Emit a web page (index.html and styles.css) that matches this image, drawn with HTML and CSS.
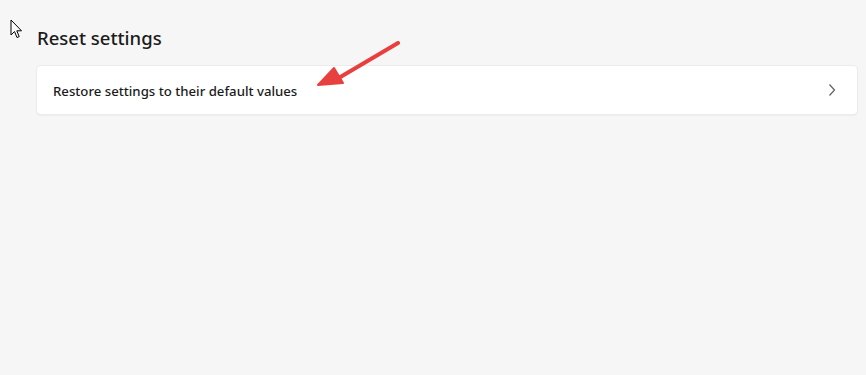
FILE: index.html
```html
<!DOCTYPE html>
<html lang="en">
<head>
    <meta charset="UTF-8">
    <title>Reset settings</title>
    <link rel="stylesheet" href="styles.css">
</head>
<body>
    <svg class="cursor" width="14" height="20" viewBox="0 0 14 20">
        <path d="M1 1 L1 16 L4.5 12.5 L7 18.5 L9.2 17.6 L6.8 11.8 L11.5 11.8 Z" fill="#fff" stroke="#000" stroke-width="1"/>
    </svg>
    <div class="page">
        <h2 class="section-title">Reset settings</h2>
        <div class="card">
            <span class="card-label">Restore settings to their default values</span>
            <svg class="chevron" width="10" height="14" viewBox="0 0 10 14">
                <path d="M2.5 1.5 L7.5 7 L2.5 12.5" fill="none" stroke="#5f5f5f" stroke-width="1.2"/>
            </svg>
        </div>
    </div>
    <svg class="annotation" width="100" height="60" viewBox="0 0 100 60">
        <line x1="81" y1="2" x2="20" y2="38" stroke="#e8403f" stroke-width="4" stroke-linecap="round"/>
        <path d="M1 44 L17 27 L26 42 Z" fill="#e8403f" stroke="#e8403f" stroke-width="2" stroke-linejoin="round"/>
    </svg>
</body>
</html>
```

FILE: styles.css
```css
body {
    margin: 0;
    background-color: #f6f6f6;
    font-family: "Noto Sans", "Open Sans", sans-serif;
    color: #1b1b1b;
    width: 866px;
    height: 375px;
    overflow: hidden;
    position: relative;
}
.page {
    padding: 22px 9px 0 37px;
}
.section-title {
    margin: 0 0 12px 0;
    font-size: 18.5px;
    font-weight: 500;
    line-height: 32px;
}
.card {
    display: flex;
    align-items: center;
    justify-content: space-between;
    height: 48px;
    padding: 0 20px 0 16px;
    background-color: #fff;
    border-radius: 4px;
    box-shadow: 0 0 0 1px #ececec, 0 1px 2px rgba(0, 0, 0, 0.12);
}
.card-label {
    font-size: 13.2px;
    font-weight: 500;
    padding-top: 1px;
}
.chevron {
    display: block;
}
.cursor {
    position: absolute;
    left: 10px;
    top: 19px;
}
.annotation {
    position: absolute;
    left: 317px;
    top: 41px;
}
```
